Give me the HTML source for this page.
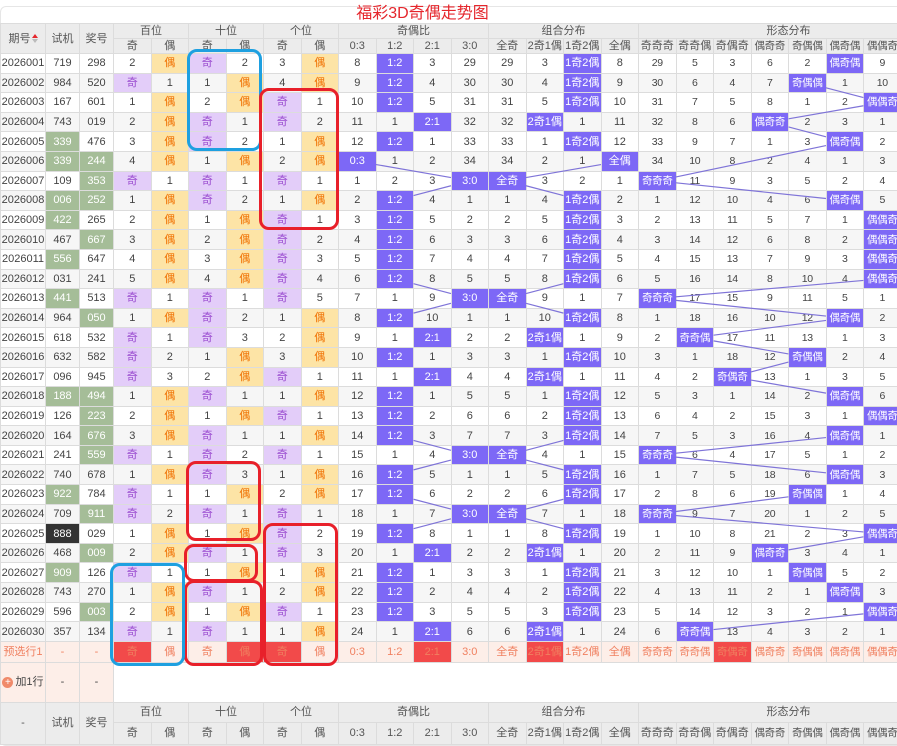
<!DOCTYPE html>
<html><head><meta charset="utf-8">
<style>
*{box-sizing:border-box;margin:0;padding:0}
body{width:897px;height:744px;overflow:hidden;background:#fff;font-family:"Liberation Sans","Noto Sans CJK SC",sans-serif;font-size:11px;color:#444;position:relative}
.card{position:absolute;left:0;top:6px;width:905px;height:740px;border:1px solid #e6e6e6;border-radius:6px}
.title{position:absolute;left:0;width:845px;top:4px;text-align:center;color:#e5262c;font-size:16px;line-height:20px}
table{position:absolute;left:0;top:23px;border-collapse:collapse;table-layout:fixed;width:1013px}
td{border:1px solid #dcdcdc;text-align:center;padding:0;white-space:nowrap;overflow:hidden;font-size:11px;line-height:12px}
.hd td{background:#ececec;color:#555;height:15px;font-size:11px;line-height:12px}
tr.r td{height:19.6px}
tr.e td{background:#f6f6f6}
tr.s td{border-top:1px solid #b5b5b5}
td.q{background:#e3cdf9!important;color:#9a4bd0}
td.o{background:#fde4a6!important;color:#f07000}
td.h{background:#7d68f6!important;color:#fff}
td.g{background:#a5bd98!important;color:#fff}
td.k{background:#333!important;color:#fff}
tr.p td{background:#fdeee8;color:#f08060;height:21px}
td.x{background:#f24a4a!important;color:#fff}
tr.a td{height:40px}
tr.a td.pk{background:#fdeee8}
.bh td{background:#ececec;color:#555}
.f td:nth-child(n+18){font-size:10.5px;letter-spacing:-0.3px}
.sort{display:inline-block;vertical-align:middle;width:6px;height:9px;position:relative;margin-left:1px}
.sort:before{content:"";position:absolute;top:0;left:0;border:3px solid transparent;border-bottom:4px solid #e5262c;border-top:0}
.sort:after{content:"";position:absolute;top:5px;left:0;border:3px solid transparent;border-top:4px solid #bbb;border-bottom:0}
.plus{display:inline-block;width:11px;height:11px;border-radius:50%;background:#f08a6a;color:#fff;font-size:10px;line-height:11px;vertical-align:middle;margin-right:2px}
.bx{position:absolute;border:3px solid;border-radius:10px}
.bl{border-color:#1ea0e0}.rd{border-color:#e8202a}
svg{position:absolute;left:0;top:0}
</style></head><body>
<div class="card"></div>
<div class="title">福彩3D奇偶走势图</div>
<table>
<colgroup><col style="width:45px"><col style="width:34px"><col style="width:34px">
<col span="24" style="width:37.5px"></colgroup>
<tr class="hd"><td rowspan="2">期号<span class="sort"></span></td><td rowspan="2">试机</td><td rowspan="2">奖号</td><td colspan="2">百位</td><td colspan="2">十位</td><td colspan="2">个位</td><td colspan="4">奇偶比</td><td colspan="4">组合分布</td><td colspan="8">形态分布</td></tr>
<tr class="hd f"><td>奇</td><td>偶</td><td>奇</td><td>偶</td><td>奇</td><td>偶</td><td>0:3</td><td>1:2</td><td>2:1</td><td>3:0</td><td>全奇</td><td>2奇1偶</td><td>1奇2偶</td><td>全偶</td><td>奇奇奇</td><td>奇奇偶</td><td>奇偶奇</td><td>偶奇奇</td><td>奇偶偶</td><td>偶奇偶</td><td>偶偶奇</td><td>偶偶偶</td></tr>
<tr class="r f"><td>2026001</td><td>719</td><td>298</td><td>2</td><td class="o">偶</td><td class="q">奇</td><td>2</td><td>3</td><td class="o">偶</td><td>8</td><td class="h">1:2</td><td>3</td><td>29</td><td>29</td><td>3</td><td class="h">1奇2偶</td><td>8</td><td>29</td><td>5</td><td>3</td><td>6</td><td>2</td><td class="h">偶奇偶</td><td>9</td><td>1</td></tr>
<tr class="r e f"><td>2026002</td><td>984</td><td>520</td><td class="q">奇</td><td>1</td><td>1</td><td class="o">偶</td><td>4</td><td class="o">偶</td><td>9</td><td class="h">1:2</td><td>4</td><td>30</td><td>30</td><td>4</td><td class="h">1奇2偶</td><td>9</td><td>30</td><td>6</td><td>4</td><td>7</td><td class="h">奇偶偶</td><td>1</td><td>10</td><td>2</td></tr>
<tr class="r f"><td>2026003</td><td>167</td><td>601</td><td>1</td><td class="o">偶</td><td>2</td><td class="o">偶</td><td class="q">奇</td><td>1</td><td>10</td><td class="h">1:2</td><td>5</td><td>31</td><td>31</td><td>5</td><td class="h">1奇2偶</td><td>10</td><td>31</td><td>7</td><td>5</td><td>8</td><td>1</td><td>2</td><td class="h">偶偶奇</td><td>3</td></tr>
<tr class="r e f"><td>2026004</td><td>743</td><td>019</td><td>2</td><td class="o">偶</td><td class="q">奇</td><td>1</td><td class="q">奇</td><td>2</td><td>11</td><td>1</td><td class="h">2:1</td><td>32</td><td>32</td><td class="h">2奇1偶</td><td>1</td><td>11</td><td>32</td><td>8</td><td>6</td><td class="h">偶奇奇</td><td>2</td><td>3</td><td>1</td><td>4</td></tr>
<tr class="r f"><td>2026005</td><td class="g">339</td><td>476</td><td>3</td><td class="o">偶</td><td class="q">奇</td><td>2</td><td>1</td><td class="o">偶</td><td>12</td><td class="h">1:2</td><td>1</td><td>33</td><td>33</td><td>1</td><td class="h">1奇2偶</td><td>12</td><td>33</td><td>9</td><td>7</td><td>1</td><td>3</td><td class="h">偶奇偶</td><td>2</td><td>5</td></tr>
<tr class="r e s f"><td>2026006</td><td class="g">339</td><td class="g">244</td><td>4</td><td class="o">偶</td><td>1</td><td class="o">偶</td><td>2</td><td class="o">偶</td><td class="h">0:3</td><td>1</td><td>2</td><td>34</td><td>34</td><td>2</td><td>1</td><td class="h">全偶</td><td>34</td><td>10</td><td>8</td><td>2</td><td>4</td><td>1</td><td>3</td><td>6</td></tr>
<tr class="r f"><td>2026007</td><td>109</td><td class="g">353</td><td class="q">奇</td><td>1</td><td class="q">奇</td><td>1</td><td class="q">奇</td><td>1</td><td>1</td><td>2</td><td>3</td><td class="h">3:0</td><td class="h">全奇</td><td>3</td><td>2</td><td>1</td><td class="h">奇奇奇</td><td>11</td><td>9</td><td>3</td><td>5</td><td>2</td><td>4</td><td>7</td></tr>
<tr class="r e f"><td>2026008</td><td class="g">006</td><td class="g">252</td><td>1</td><td class="o">偶</td><td class="q">奇</td><td>2</td><td>1</td><td class="o">偶</td><td>2</td><td class="h">1:2</td><td>4</td><td>1</td><td>1</td><td>4</td><td class="h">1奇2偶</td><td>2</td><td>1</td><td>12</td><td>10</td><td>4</td><td>6</td><td class="h">偶奇偶</td><td>5</td><td>8</td></tr>
<tr class="r f"><td>2026009</td><td class="g">422</td><td>265</td><td>2</td><td class="o">偶</td><td>1</td><td class="o">偶</td><td class="q">奇</td><td>1</td><td>3</td><td class="h">1:2</td><td>5</td><td>2</td><td>2</td><td>5</td><td class="h">1奇2偶</td><td>3</td><td>2</td><td>13</td><td>11</td><td>5</td><td>7</td><td>1</td><td class="h">偶偶奇</td><td>9</td></tr>
<tr class="r e f"><td>2026010</td><td>467</td><td class="g">667</td><td>3</td><td class="o">偶</td><td>2</td><td class="o">偶</td><td class="q">奇</td><td>2</td><td>4</td><td class="h">1:2</td><td>6</td><td>3</td><td>3</td><td>6</td><td class="h">1奇2偶</td><td>4</td><td>3</td><td>14</td><td>12</td><td>6</td><td>8</td><td>2</td><td class="h">偶偶奇</td><td>10</td></tr>
<tr class="r s f"><td>2026011</td><td class="g">556</td><td>647</td><td>4</td><td class="o">偶</td><td>3</td><td class="o">偶</td><td class="q">奇</td><td>3</td><td>5</td><td class="h">1:2</td><td>7</td><td>4</td><td>4</td><td>7</td><td class="h">1奇2偶</td><td>5</td><td>4</td><td>15</td><td>13</td><td>7</td><td>9</td><td>3</td><td class="h">偶偶奇</td><td>11</td></tr>
<tr class="r e f"><td>2026012</td><td>031</td><td>241</td><td>5</td><td class="o">偶</td><td>4</td><td class="o">偶</td><td class="q">奇</td><td>4</td><td>6</td><td class="h">1:2</td><td>8</td><td>5</td><td>5</td><td>8</td><td class="h">1奇2偶</td><td>6</td><td>5</td><td>16</td><td>14</td><td>8</td><td>10</td><td>4</td><td class="h">偶偶奇</td><td>12</td></tr>
<tr class="r f"><td>2026013</td><td class="g">441</td><td>513</td><td class="q">奇</td><td>1</td><td class="q">奇</td><td>1</td><td class="q">奇</td><td>5</td><td>7</td><td>1</td><td>9</td><td class="h">3:0</td><td class="h">全奇</td><td>9</td><td>1</td><td>7</td><td class="h">奇奇奇</td><td>17</td><td>15</td><td>9</td><td>11</td><td>5</td><td>1</td><td>13</td></tr>
<tr class="r e f"><td>2026014</td><td>964</td><td class="g">050</td><td>1</td><td class="o">偶</td><td class="q">奇</td><td>2</td><td>1</td><td class="o">偶</td><td>8</td><td class="h">1:2</td><td>10</td><td>1</td><td>1</td><td>10</td><td class="h">1奇2偶</td><td>8</td><td>1</td><td>18</td><td>16</td><td>10</td><td>12</td><td class="h">偶奇偶</td><td>2</td><td>14</td></tr>
<tr class="r f"><td>2026015</td><td>618</td><td>532</td><td class="q">奇</td><td>1</td><td class="q">奇</td><td>3</td><td>2</td><td class="o">偶</td><td>9</td><td>1</td><td class="h">2:1</td><td>2</td><td>2</td><td class="h">2奇1偶</td><td>1</td><td>9</td><td>2</td><td class="h">奇奇偶</td><td>17</td><td>11</td><td>13</td><td>1</td><td>3</td><td>15</td></tr>
<tr class="r e s f"><td>2026016</td><td>632</td><td>582</td><td class="q">奇</td><td>2</td><td>1</td><td class="o">偶</td><td>3</td><td class="o">偶</td><td>10</td><td class="h">1:2</td><td>1</td><td>3</td><td>3</td><td>1</td><td class="h">1奇2偶</td><td>10</td><td>3</td><td>1</td><td>18</td><td>12</td><td class="h">奇偶偶</td><td>2</td><td>4</td><td>16</td></tr>
<tr class="r f"><td>2026017</td><td>096</td><td>945</td><td class="q">奇</td><td>3</td><td>2</td><td class="o">偶</td><td class="q">奇</td><td>1</td><td>11</td><td>1</td><td class="h">2:1</td><td>4</td><td>4</td><td class="h">2奇1偶</td><td>1</td><td>11</td><td>4</td><td>2</td><td class="h">奇偶奇</td><td>13</td><td>1</td><td>3</td><td>5</td><td>17</td></tr>
<tr class="r e f"><td>2026018</td><td class="g">188</td><td class="g">494</td><td>1</td><td class="o">偶</td><td class="q">奇</td><td>1</td><td>1</td><td class="o">偶</td><td>12</td><td class="h">1:2</td><td>1</td><td>5</td><td>5</td><td>1</td><td class="h">1奇2偶</td><td>12</td><td>5</td><td>3</td><td>1</td><td>14</td><td>2</td><td class="h">偶奇偶</td><td>6</td><td>18</td></tr>
<tr class="r f"><td>2026019</td><td>126</td><td class="g">223</td><td>2</td><td class="o">偶</td><td>1</td><td class="o">偶</td><td class="q">奇</td><td>1</td><td>13</td><td class="h">1:2</td><td>2</td><td>6</td><td>6</td><td>2</td><td class="h">1奇2偶</td><td>13</td><td>6</td><td>4</td><td>2</td><td>15</td><td>3</td><td>1</td><td class="h">偶偶奇</td><td>19</td></tr>
<tr class="r e f"><td>2026020</td><td>164</td><td class="g">676</td><td>3</td><td class="o">偶</td><td class="q">奇</td><td>1</td><td>1</td><td class="o">偶</td><td>14</td><td class="h">1:2</td><td>3</td><td>7</td><td>7</td><td>3</td><td class="h">1奇2偶</td><td>14</td><td>7</td><td>5</td><td>3</td><td>16</td><td>4</td><td class="h">偶奇偶</td><td>1</td><td>20</td></tr>
<tr class="r s f"><td>2026021</td><td>241</td><td class="g">559</td><td class="q">奇</td><td>1</td><td class="q">奇</td><td>2</td><td class="q">奇</td><td>1</td><td>15</td><td>1</td><td>4</td><td class="h">3:0</td><td class="h">全奇</td><td>4</td><td>1</td><td>15</td><td class="h">奇奇奇</td><td>6</td><td>4</td><td>17</td><td>5</td><td>1</td><td>2</td><td>21</td></tr>
<tr class="r e f"><td>2026022</td><td>740</td><td>678</td><td>1</td><td class="o">偶</td><td class="q">奇</td><td>3</td><td>1</td><td class="o">偶</td><td>16</td><td class="h">1:2</td><td>5</td><td>1</td><td>1</td><td>5</td><td class="h">1奇2偶</td><td>16</td><td>1</td><td>7</td><td>5</td><td>18</td><td>6</td><td class="h">偶奇偶</td><td>3</td><td>22</td></tr>
<tr class="r f"><td>2026023</td><td class="g">922</td><td>784</td><td class="q">奇</td><td>1</td><td>1</td><td class="o">偶</td><td>2</td><td class="o">偶</td><td>17</td><td class="h">1:2</td><td>6</td><td>2</td><td>2</td><td>6</td><td class="h">1奇2偶</td><td>17</td><td>2</td><td>8</td><td>6</td><td>19</td><td class="h">奇偶偶</td><td>1</td><td>4</td><td>23</td></tr>
<tr class="r e f"><td>2026024</td><td>709</td><td class="g">911</td><td class="q">奇</td><td>2</td><td class="q">奇</td><td>1</td><td class="q">奇</td><td>1</td><td>18</td><td>1</td><td>7</td><td class="h">3:0</td><td class="h">全奇</td><td>7</td><td>1</td><td>18</td><td class="h">奇奇奇</td><td>9</td><td>7</td><td>20</td><td>1</td><td>2</td><td>5</td><td>24</td></tr>
<tr class="r f"><td>2026025</td><td class="k">888</td><td>029</td><td>1</td><td class="o">偶</td><td>1</td><td class="o">偶</td><td class="q">奇</td><td>2</td><td>19</td><td class="h">1:2</td><td>8</td><td>1</td><td>1</td><td>8</td><td class="h">1奇2偶</td><td>19</td><td>1</td><td>10</td><td>8</td><td>21</td><td>2</td><td>3</td><td class="h">偶偶奇</td><td>25</td></tr>
<tr class="r e s f"><td>2026026</td><td>468</td><td class="g">009</td><td>2</td><td class="o">偶</td><td class="q">奇</td><td>1</td><td class="q">奇</td><td>3</td><td>20</td><td>1</td><td class="h">2:1</td><td>2</td><td>2</td><td class="h">2奇1偶</td><td>1</td><td>20</td><td>2</td><td>11</td><td>9</td><td class="h">偶奇奇</td><td>3</td><td>4</td><td>1</td><td>26</td></tr>
<tr class="r f"><td>2026027</td><td class="g">909</td><td>126</td><td class="q">奇</td><td>1</td><td>1</td><td class="o">偶</td><td>1</td><td class="o">偶</td><td>21</td><td class="h">1:2</td><td>1</td><td>3</td><td>3</td><td>1</td><td class="h">1奇2偶</td><td>21</td><td>3</td><td>12</td><td>10</td><td>1</td><td class="h">奇偶偶</td><td>5</td><td>2</td><td>27</td></tr>
<tr class="r e f"><td>2026028</td><td>743</td><td>270</td><td>1</td><td class="o">偶</td><td class="q">奇</td><td>1</td><td>2</td><td class="o">偶</td><td>22</td><td class="h">1:2</td><td>2</td><td>4</td><td>4</td><td>2</td><td class="h">1奇2偶</td><td>22</td><td>4</td><td>13</td><td>11</td><td>2</td><td>1</td><td class="h">偶奇偶</td><td>3</td><td>28</td></tr>
<tr class="r f"><td>2026029</td><td>596</td><td class="g">003</td><td>2</td><td class="o">偶</td><td>1</td><td class="o">偶</td><td class="q">奇</td><td>1</td><td>23</td><td class="h">1:2</td><td>3</td><td>5</td><td>5</td><td>3</td><td class="h">1奇2偶</td><td>23</td><td>5</td><td>14</td><td>12</td><td>3</td><td>2</td><td>1</td><td class="h">偶偶奇</td><td>29</td></tr>
<tr class="r e f"><td>2026030</td><td>357</td><td>134</td><td class="q">奇</td><td>1</td><td class="q">奇</td><td>1</td><td>1</td><td class="o">偶</td><td>24</td><td>1</td><td class="h">2:1</td><td>6</td><td>6</td><td class="h">2奇1偶</td><td>1</td><td>24</td><td>6</td><td class="h">奇奇偶</td><td>13</td><td>4</td><td>3</td><td>2</td><td>1</td><td>30</td></tr>
<tr class="p f"><td>预选行1</td><td>-</td><td>-</td><td class="x">奇</td><td>偶</td><td>奇</td><td class="x">偶</td><td class="x">奇</td><td>偶</td><td>0:3</td><td>1:2</td><td class="x">2:1</td><td>3:0</td><td>全奇</td><td class="x">2奇1偶</td><td>1奇2偶</td><td>全偶</td><td>奇奇奇</td><td>奇奇偶</td><td class="x">奇偶奇</td><td>偶奇奇</td><td>奇偶偶</td><td>偶奇偶</td><td>偶偶奇</td><td>偶偶偶</td></tr>
<tr class="a"><td class="pk"><span class="plus">+</span>加1行</td><td class="pk">-</td><td class="pk">-</td><td colspan="24" style="border-bottom:1px solid #dcdcdc"></td></tr>
<tr class="bh"><td rowspan="2">-</td><td rowspan="2">试机</td><td rowspan="2">奖号</td><td colspan="2" style="height:20px">百位</td><td colspan="2">十位</td><td colspan="2">个位</td><td colspan="4">奇偶比</td><td colspan="4">组合分布</td><td colspan="8">形态分布</td></tr>
<tr class="bh f"><td style="height:22px">奇</td><td>偶</td><td>奇</td><td>偶</td><td>奇</td><td>偶</td><td>0:3</td><td>1:2</td><td>2:1</td><td>3:0</td><td>全奇</td><td>2奇1偶</td><td>1奇2偶</td><td>全偶</td><td>奇奇奇</td><td>奇奇偶</td><td>奇偶奇</td><td>偶奇奇</td><td>奇偶偶</td><td>偶奇偶</td><td>偶偶奇</td><td>偶偶偶</td></tr>
</table>
<svg id="ln" width="897" height="744"></svg>
<div class="bx bl" style="left:187px;top:49px;width:75px;height:102px"></div>
<div class="bx rd" style="left:259px;top:88px;width:80px;height:142px"></div>
<div class="bx rd" style="left:186px;top:461px;width:75px;height:80px"></div>
<div class="bx rd" style="left:184px;top:544px;width:74px;height:38px"></div>
<div class="bx rd" style="left:263px;top:523px;width:75px;height:143px"></div>
<div class="bx rd" style="left:184px;top:580px;width:79px;height:86px"></div>
<div class="bx bl" style="left:110px;top:563px;width:75px;height:103px"></div>
<script>
(function(){
var rows=document.querySelectorAll('tr.r'),svg=document.getElementById('ln'),prev=[null,null,null],out='';
rows.forEach(function(tr){
 var tds=tr.children;
 [[9,13],[13,17],[17,25]].forEach(function(g,gi){
  for(var i=g[0];i<g[1];i++){ if(tds[i]&&tds[i].classList.contains('h')){
   var r=tds[i].getBoundingClientRect(),c={x:r.left+r.width/2,y:r.top+r.height/2,w:r.width/2,h:r.height/2};
   var p=prev[gi];
   if(p&&Math.abs(p.x-c.x)>1){
    var dx=c.x-p.x,dy=c.y-p.y,t=Math.min(p.w/Math.abs(dx),p.h/Math.abs(dy));
    out+='<line x1="'+(p.x+dx*t)+'" y1="'+(p.y+dy*t)+'" x2="'+(c.x-dx*t)+'" y2="'+(c.y-dy*t)+'" stroke="#7f74d8" stroke-width="1.2"/>';
   }
   prev[gi]=c;break;}}
 });
});
svg.innerHTML=out;
})();
</script>
</body></html>
